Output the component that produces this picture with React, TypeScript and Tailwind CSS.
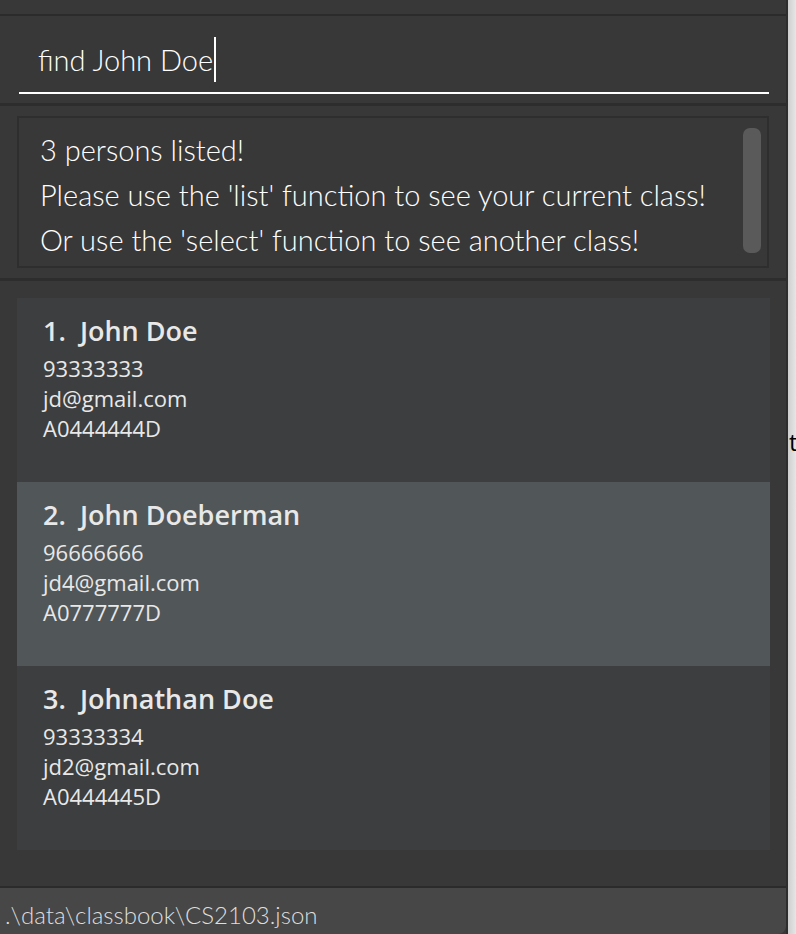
import React from 'react'

type Person = { name: string; phone: string; email: string; id: string }

const persons: Person[] = [
  { name: 'John Doe', phone: '93333333', email: 'jd@gmail.com', id: 'A0444444D' },
  { name: 'John Doeberman', phone: '96666666', email: 'jd4@gmail.com', id: 'A0777777D' },
  { name: 'Johnathan Doe', phone: '93333334', email: 'jd2@gmail.com', id: 'A0444445D' },
]

const light = "font-['Lato','Open_Sans',sans-serif] font-light"
const card = "font-['Open_Sans','Noto_Sans',sans-serif]"

function PersonCard({ person, index }: { person: Person; index: number }) {
  // alternating rows, same as the list-cell even/odd colours
  const bg = index % 2 === 0 ? 'bg-[#3c3e3f]' : 'bg-[#515658]'
  return (
    <div className={`${bg} h-[184px] pl-[26px] pt-[13px] ${card}`}>
      <div className="text-[27px] leading-[40px] font-semibold text-[#e8e8e8]">
        {index + 1}.&nbsp;&nbsp;{person.name}
      </div>
      <div className="mt-[2px] text-[22px] leading-[30px] text-[#e8e8e8]">
        <div>{person.phone}</div>
        <div>{person.email}</div>
        <div>{person.id}</div>
      </div>
    </div>
  )
}

export default function App() {
  return (
    <div className="flex h-[934px] w-[796px] overflow-hidden bg-[#dcdcdc]">
      <div className="flex w-[788px] flex-col border-r-2 border-[#2e2e2e] bg-[#383838]">
        <div className="h-[16px] shrink-0 border-b-2 border-[#2b2b2b]" />

        <div className="h-[90px] shrink-0 border-b-[3px] border-[#2d2d2d] px-[17px] pt-[20px]">
          <div className={`ml-[2px] flex h-[58px] items-start border-b-2 border-white pl-[19px] pt-[1px] text-[29px] text-white ${light}`}>
            <span className="leading-[45px]">find John Doe</span>
            <span className="ml-[1px] h-[45px] w-[2px] bg-white" />
          </div>
        </div>

        <div className="h-[175px] shrink-0 border-b-[3px] border-[#2d2d2d] px-[17px] pt-[10px]">
          <div className="flex h-[152px] border-2 border-[#2e2e2e] pl-[21px] pr-[6px] pt-[9px]">
            <div className={`flex-1 text-[29px] leading-[45px] text-white ${light}`}>
              <div>3 persons listed!</div>
              <div>Please use the 'list' function to see your current class!</div>
              <div>Or use the 'select' function to see another class!</div>
            </div>
            <div className="mt-[1px] h-[125px] w-[18px] rounded-[7px] bg-[#5a5a5a]" />
          </div>
        </div>

        <div className="flex-1 border-b-2 border-[#2b2b2b] pl-[17px] pr-[16px] pt-[17px]">
          {persons.map((p, i) => (
            <PersonCard key={p.id} person={p} index={i} />
          ))}
        </div>

        <div className={`h-[46px] shrink-0 rounded-br-[8px] bg-[#474747] pl-[5px] pt-[12px] text-[24px] leading-[30px] text-[#dedede] ${light}`}>
          .\data\classbook\CS2103.json
        </div>
      </div>

      <div className="relative w-[8px] overflow-hidden bg-gradient-to-r from-[#cfcfcf] to-[#e6e6e6]">
        <span className="absolute left-[1px] top-[424px] font-['Open_Sans',sans-serif] text-[24px] text-black">t</span>
      </div>
    </div>
  )
}
